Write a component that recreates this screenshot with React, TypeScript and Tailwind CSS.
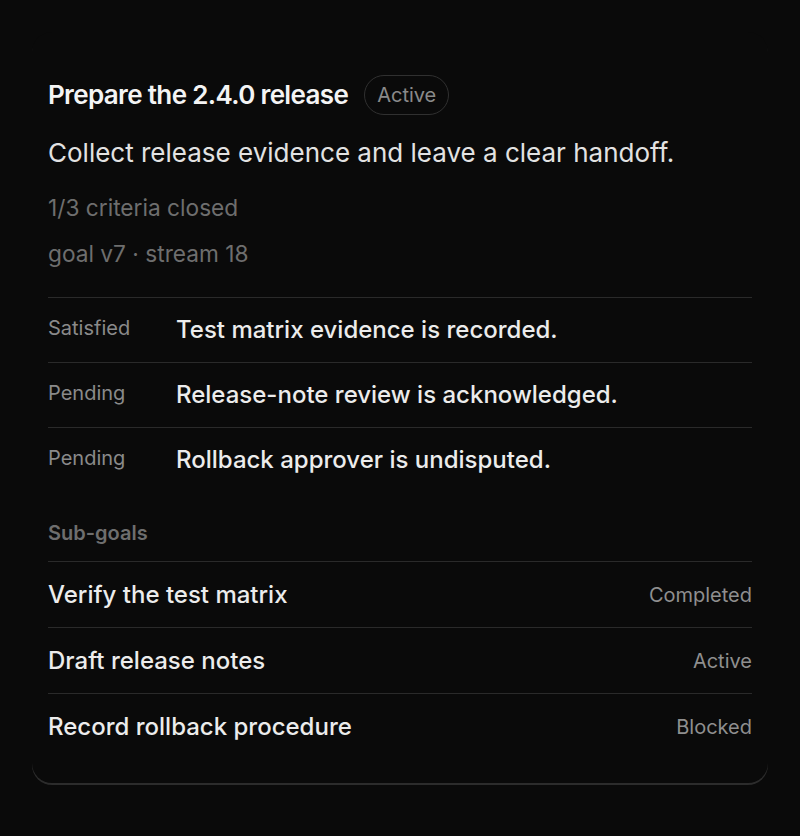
import React from "react";

const criteria = [
  { status: "Satisfied", text: "Test matrix evidence is recorded." },
  { status: "Pending", text: "Release-note review is acknowledged." },
  { status: "Pending", text: "Rollback approver is undisputed." },
];

const subGoals = [
  { title: "Verify the test matrix", status: "Completed" },
  { title: "Draft release notes", status: "Active" },
  { title: "Record rollback procedure", status: "Blocked" },
];

export default function App() {
  return (
    <div
      className="min-h-[836px] bg-[#0a0a0a] px-8 pt-8 pb-12"
      style={{ fontFamily: "Inter, 'Noto Sans', sans-serif" }}
    >
      <div className="rounded-[20px] bg-[#0a0a0a] px-4 pt-[43px] pb-6 shadow-[0_2px_0_#2c2c2c]">
        {/* Header */}
        <div className="flex items-center gap-4">
          <h1 className="text-[26px] font-semibold leading-10 tracking-[-0.025em] text-[#f4f4f4]">
            Prepare the 2.4.0 release
          </h1>
          <span className="flex h-10 items-center rounded-full border border-[#303030] px-3 text-[20px] text-[#8a8a8a]">
            Active
          </span>
        </div>

        <p className="mt-[22px] text-[26px] leading-8 text-[#e2e2e2]">
          Collect release evidence and leave a clear handoff.
        </p>

        <p className="mt-[25px] text-[22.7px] leading-7 text-[#6e6e6e]">
          1/3 criteria closed
        </p>
        <p className="mt-[18px] text-[22.7px] leading-7 text-[#6e6e6e]">
          goal v7 · stream 18
        </p>

        {/* Criteria */}
        <div className="mt-[29px]">
          {criteria.map((c, i) => (
            <div
              key={i}
              className="grid grid-cols-[128px_1fr] border-t border-[#2a2a2a] py-4"
            >
              <span className="text-[20px] leading-7 text-[#8a8a8a]">
                {c.status}
              </span>
              <span className="text-[24px] font-medium leading-8 text-[#ececec]">
                {c.text}
              </span>
            </div>
          ))}
        </div>

        {/* Sub-goals */}
        <h2 className="mt-[27px] mb-[14px] text-[20px] font-semibold leading-7 text-[#6e6e6e]">
          Sub-goals
        </h2>
        <div>
          {subGoals.map((g, i) => (
            <div
              key={i}
              className="flex items-center justify-between border-t border-[#2a2a2a] py-4"
            >
              <span className="text-[24px] font-medium leading-[33px] text-[#ececec]">
                {g.title}
              </span>
              <span className="text-[20px] leading-7 text-[#8f8f8f]">
                {g.status}
              </span>
            </div>
          ))}
        </div>
      </div>
    </div>
  );
}
